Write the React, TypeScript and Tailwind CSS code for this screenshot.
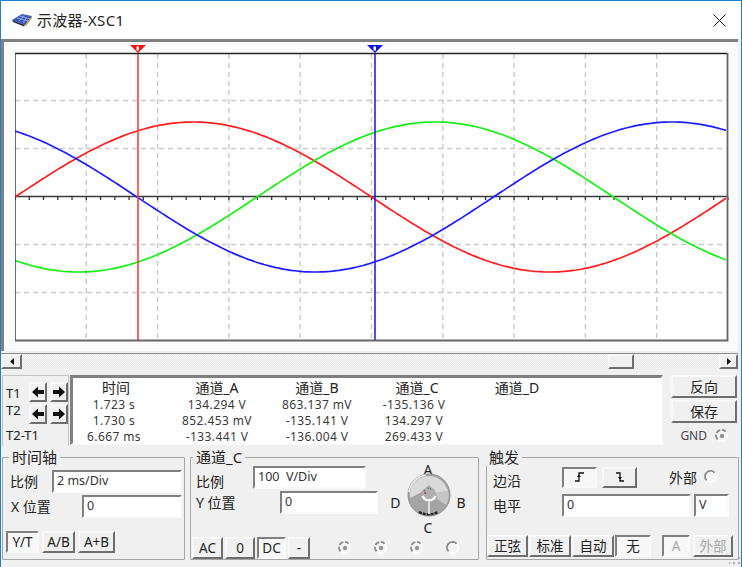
import type { ReactNode } from 'react';

const font = "font-['Noto_Sans','Noto_Sans_CJK_SC',sans-serif]";
const raised = 'border-2 border-t-[#f8f8f8] border-l-[#f8f8f8] border-r-[#6e6e6e] border-b-[#6e6e6e] bg-[#f0f0f0]';
const sunken = 'border-2 border-t-[#808080] border-l-[#808080] border-r-[#fafafa] border-b-[#fafafa]';

const curve = (fn: (x: number) => number) => {
  const pts: string[] = [];
  for (let x = 15; x <= 727; x += 3) pts.push(`${x},${fn(x).toFixed(1)}`);
  return pts.join(' ');
};
const wave = (x: number, zero: number, sign: number) => 197 - sign * 75 * Math.sin((2 * Math.PI * (x - zero)) / 713);

const rows = [
  ['1.723 s', '134.294 V', '863.137 mV', '-135.136 V'],
  ['1.730 s', '852.453 mV', '-135.141 V', '134.297 V'],
  ['6.667 ms', '-133.441 V', '-136.004 V', '269.433 V'],
];

function Btn({ w, pressed, disabled, children }: { w: string; pressed?: boolean; disabled?: boolean; children: ReactNode }) {
  return (
    <div
      className={`${w} h-full flex items-center justify-center text-[13.5px] ${pressed ? sunken : raised} ${pressed ? 'bg-[#f7f7f7]' : ''} ${disabled ? 'text-[#a8a8a8]' : 'text-[#222]'}`}
    >
      {children}
    </div>
  );
}

function Field({ w, value }: { w: string; value: string }) {
  return (
    <div className={`${w} h-[23px] ${sunken} bg-white flex items-center pl-[3px] text-[12.5px] text-[#333] whitespace-pre`}>{value}</div>
  );
}

function Radio({ on }: { on?: boolean }) {
  return (
    <svg width="14" height="14" viewBox="0 0 14 14" className="shrink-0">
      <circle cx="7" cy="7" r="5.5" fill="#f5f5f5" stroke="#fbfbfb" strokeWidth="1.4" />
      <path d="M2.6 10.4A5.5 5.5 0 0 1 10.6 2.6" fill="none" stroke="#8a8a8a" strokeWidth="1.8" strokeDasharray={on ? '5 1.5' : undefined} />
      {on && <circle cx="7" cy="7" r="2.2" fill="#949494" />}
    </svg>
  );
}

function Arrow({ dir }: { dir: 'l' | 'r' }) {
  return (
    <div className={`w-[18px] h-[20px] flex items-center justify-center ${raised}`}>
      <svg width="12" height="12" viewBox="0 0 12 12">
        <path d={dir === 'l' ? 'M0 6 L6 0.5 V4 H12 V8 H6 V11.5 Z' : 'M12 6 L6 0.5 V4 H0 V8 H6 V11.5 Z'} fill="#111" />
      </svg>
    </div>
  );
}

function Knob() {
  return (
    <svg width="48" height="48" viewBox="0 0 48 48" className="block shrink-0">
      <circle cx="24" cy="24" r="21" fill="#a4a4a4" stroke="#8e8e8e" strokeWidth="1" />
      <path d="M5 27A19 19 0 0 1 24 5C33 5 40 11 43 20L31 22L24 14L15 22Z" fill="#dadada" />
      <path d="M4 21A20 20 0 0 1 21 4" fill="none" stroke="#f2f2f2" strokeWidth="1.5" />
      <path d="M43 20A19 19 0 0 1 41 34L32 28L31 22Z" fill="#c6c6c6" />
      <path d="M14 41A20 20 0 0 0 33 41" fill="none" stroke="#1c1c1c" strokeWidth="2.2" strokeDasharray="3 1" />
      <circle cx="24" cy="23" r="7" fill="#b0b0b0" />
      <path d="M17.5 25A7 7 0 0 0 30.5 25" fill="none" stroke="#fbfbfb" strokeWidth="2.4" />
      <path d="M24 31V43" stroke="#f4f4f4" strokeWidth="1.5" />
      <path d="M19 19L21 23M23 17L26 18" stroke="#555" strokeWidth="1.2" strokeDasharray="1 1" />
      <circle cx="20" cy="22" r="0.9" fill="#b04a30" />
    </svg>
  );
}

function Edge({ falling }: { falling?: boolean }) {
  return (
    <svg width="14" height="12" viewBox="0 0 14 12">
      <path d={falling ? 'M3 2H7V10H11' : 'M2 10H6V2H11'} fill="none" stroke="#111" strokeWidth="1.3" />
      <path d={falling ? 'M5 6H9L7 8.5Z' : 'M4 6H8L6 3.5Z'} fill="#111" />
    </svg>
  );
}

function Group({ title, w, legend, children }: { title: string; w: string; legend: string; children: ReactNode }) {
  return (
    <fieldset className={`${w} h-[112px] border border-[#a6a6a6] rounded-[1px] -mt-px`}>
      <legend className={`${legend} px-[3px] text-[15px] leading-[18px] text-[#222]`}>{title}</legend>
      {children}
    </fieldset>
  );
}

export default function App() {
  return (
    <div className={`relative w-[742px] h-[567px] overflow-hidden flex flex-col bg-[#f0f0f0] border border-b-0 border-[#1b82d2] ${font}`}>
      {/* Title bar */}
      <div className="h-[38px] shrink-0 bg-white flex items-center pl-[10px] pr-[15px]">
        <svg width="22" height="14" viewBox="0 0 22 14" className="mr-[3px]">
          <path d="M1 7L11 1L21 3L14 12Z" fill="#3c58b8" />
          <path d="M1 7L14 12L13 13.5L2 9Z" fill="#22284a" />
          <path d="M14 12L21 3V5L15 13Z" fill="#c89030" />
          <path d="M6 5L17 8M9 3L19 6M8 8L13 2.5M12 10L16 4.5" stroke="#9db8f0" strokeWidth="0.8" fill="none" />
        </svg>
        <span className="text-[15px] tracking-[0.3px] text-[#222] ml-[1px]">示波器-XSC1</span>
        <svg width="13" height="13" viewBox="0 0 13 13" className="ml-auto">
          <path d="M0.5 0.5L12.5 12.5M12.5 0.5L0.5 12.5" stroke="#111" strokeWidth="1" />
        </svg>
      </div>

      {/* Scope display */}
      <div className="h-[312px] shrink-0 mr-[3px] bg-[#fbfbfb] border-t-[3px] border-l-[3px] border-[#808080] pl-[11px] pt-[3px]">
        <svg width="714" height="297" viewBox="15 45 714 297" className="block">
          <rect x="15" y="53" width="713" height="287" fill="#fff" />
          {[1, 2, 3, 4, 5, 6, 7, 8, 9].map((i) => (
            <line key={i} x1={15 + i * 71.3} y1="54" x2={15 + i * 71.3} y2="340" stroke="#c9c9c9" strokeWidth="1.4" strokeDasharray="5 4" />
          ))}
          {[100.5, 148.5, 244.5, 292.5].map((y) => (
            <line key={y} x1="15" y1={y} x2="728" y2={y} stroke="#c9c9c9" strokeWidth="1.4" strokeDasharray="5 4" />
          ))}
          <line x1="15" y1="196.5" x2="728" y2="196.5" stroke="#3a3a3a" strokeWidth="1.6" />
          {Array.from({ length: 51 }, (_, i) => (
            <line key={i} x1={15 + i * 14.26} y1="197" x2={15 + i * 14.26} y2="200" stroke="#333" strokeWidth="1.3" />
          ))}
          <polyline points={curve((x) => wave(x, 15, 1))} fill="none" stroke="#ff1c1c" strokeWidth="1.7" />
          <polyline points={curve((x) => wave(x, 257, 1))} fill="none" stroke="#14f014" strokeWidth="1.7" />
          <polyline points={curve((x) => wave(x, 137, -1))} fill="none" stroke="#1c1cff" strokeWidth="1.7" />
          <line x1="138" y1="53" x2="138" y2="340" stroke="#ff3c3c" strokeWidth="1.6" />
          <line x1="375" y1="53" x2="375" y2="340" stroke="#2020f0" strokeWidth="1.6" />
          <path d="M130 45H146L138 53Z" fill="#f01010" />
          <rect x="136.5" y="46.5" width="2.5" height="4" fill="#fff" />
          <path d="M367 45H383L375 53Z" fill="#1010e0" />
          <rect x="373.5" y="46.5" width="2.5" height="4" fill="#fff" />
          <path d="M15 340V53.5H727" fill="none" stroke="#222" strokeWidth="1.3" />
          <path d="M727.5 53V340.5H15" fill="none" stroke="#666" strokeWidth="1.8" />
        </svg>
      </div>

      {/* Horizontal scrollbar */}
      <div className="h-[16px] shrink-0 mt-[2px] mr-[3px] flex bg-[repeating-conic-gradient(#f6f6f6_0_25%,#e8e8e8_0_50%)] bg-[length:2px_2px] border-t border-[#8a8a8a]">
        <div className={`w-[21px] flex items-center justify-center ${raised}`}>
          <svg width="4" height="7" viewBox="0 0 4 7"><path d="M4 0V7L0 3.5Z" fill="#111" /></svg>
        </div>
        <div className={`w-[26px] ml-[586px] ${raised}`} />
        <div className={`w-[19px] ml-auto flex items-center justify-center ${raised}`}>
          <svg width="4" height="7" viewBox="0 0 4 7"><path d="M0 0V7L4 3.5Z" fill="#111" /></svg>
        </div>
      </div>

      {/* Cursors, readout, reverse / save */}
      <div className="h-[71px] shrink-0 mt-[6px] pl-[1px] flex text-[#222]">
        <div className="w-[67px] border border-[#c4c4c4] border-b-0">
          <div className="flex">
            <div className="w-[26px] pl-[3px] pt-[9px] text-[13px] leading-[17px]">
              <div>T1</div>
              <div>T2</div>
            </div>
            <div className="pt-[6px] flex flex-col gap-[2px]">
              <div className="flex gap-[3px]"><Arrow dir="l" /><Arrow dir="r" /></div>
              <div className="flex gap-[3px]"><Arrow dir="l" /><Arrow dir="r" /></div>
            </div>
          </div>
          <div className="pl-[3px] mt-[3px] text-[13px] leading-[16px]">T2-T1</div>
        </div>

        <div className={`w-[593px] ml-[1px] h-[70px] ${sunken} border-t-[3px] border-l-[3px] bg-white`}>
          <div className="grid grid-cols-[94px_100px_100px_100px_100px] text-center text-[12px] tracking-[0.4px] leading-[16px] text-[#3a3a3a]">
            <div className="pr-[8px] text-[14px] tracking-normal leading-[19px] text-[#222]">时间</div>
            <div className="text-[14px] tracking-normal leading-[19px] text-[#222]">通道_A</div>
            <div className="text-[14px] tracking-normal leading-[19px] text-[#222]">通道_B</div>
            <div className="text-[14px] tracking-normal leading-[19px] text-[#222]">通道_C</div>
            <div className="text-[14px] tracking-normal leading-[19px] text-[#222]">通道_D</div>
            {rows.map((r) => [
              <div key={r[0]} className="pr-[12px]">{r[0]}</div>,
              <div key={r[0] + 'a'}>{r[1]}</div>,
              <div key={r[0] + 'b'}>{r[2]}</div>,
              <div key={r[0] + 'c'} className="pr-[6px]">{r[3]}</div>,
              <div key={r[0] + 'd'} />,
            ])}
          </div>
        </div>

        <div className="ml-[8px] w-[66px] flex flex-col gap-[2px]">
          <div className={`h-[23px] flex items-center justify-center text-[14px] ${raised}`}>反向</div>
          <div className={`h-[23px] flex items-center justify-center text-[14px] ${raised}`}>保存</div>
          <div className="flex items-center justify-end gap-[8px] pr-[8px] mt-[2px] text-[12px] text-[#444]">
            GND <Radio on />
          </div>
        </div>
      </div>

      {/* Timebase, channel and trigger groups */}
      <div className="h-[113px] shrink-0 mt-[3px] pl-[1px] flex text-[#222] text-[14px]">
        <Group title="时间轴" w="w-[183px]" legend="ml-[6px]">
          <div className="flex items-center h-[23px] mt-[4px] pl-[7px]">
            <span className="w-[42px]">比例</span>
            <Field w="w-[130px]" value="2 ms/Div" />
          </div>
          <div className="flex items-center h-[23px] mt-[2px] pl-[8px]">
            <span className="w-[71px]">X 位置</span>
            <Field w="w-[100px]" value="0" />
          </div>
          <div className="flex h-[22px] mt-[13px] pl-[3px] gap-[3px] text-[13px]">
            <Btn w="w-[33px]" pressed>Y/T</Btn>
            <Btn w="w-[33px]">A/B</Btn>
            <Btn w="w-[37px]">A+B</Btn>
          </div>
        </Group>

        <div className="ml-[5px]">
          <Group title="通道_C" w="w-[289px]" legend="ml-[2px]">
            <div className="flex h-[72px]">
              <div className="w-[196px] pl-[5px]">
                <div className="flex items-center h-[23px]">
                  <span className="w-[57px] pt-[8px]">比例</span>
                  <Field w="w-[113px]" value="100  V/Div" />
                </div>
                <div className="flex items-center h-[23px] mt-[2px]">
                  <span className="w-[84px]">Y 位置</span>
                  <Field w="w-[98px]" value="0" />
                </div>
              </div>
              <div className="w-[82px] text-[14px] leading-[15px] text-center -mt-[4px]">
                <div>A</div>
                <div className="flex justify-center gap-[4px] -mt-[6px] mb-[1px]">
                  <span className="pt-[24px]">D</span>
                  <Knob />
                  <span className="pt-[24px]">B</span>
                </div>
                <div>C</div>
              </div>
            </div>
            <div className="flex items-center h-[22px] pl-[1px] -mt-[1px] gap-[2px]">
              <Btn w="w-[31px]">AC</Btn>
              <Btn w="w-[30px]">0</Btn>
              <Btn w="w-[29px]" pressed>DC</Btn>
              <Btn w="w-[22px]">-</Btn>
              <div className="ml-[26px] flex gap-[22px]">
                <Radio on />
                <Radio on />
                <Radio on />
                <Radio />
              </div>
            </div>
          </Group>
        </div>

        <div className="ml-[7px]">
          <Group title="触发" w="w-[253px]" legend="-ml-[1px]">
            <div className="flex items-center h-[22px] pl-[6px]">
              <span className="w-[69px] pt-[6px]">边沿</span>
              <div className={`w-[35px] h-[21px] flex items-center justify-center bg-[#f7f7f7] ${sunken}`}><Edge /></div>
              <div className={`w-[35px] h-[21px] ml-[5px] flex items-center justify-center ${raised}`}><Edge falling /></div>
              <span className="ml-[32px]">外部</span>
              <div className="ml-[7px]"><Radio /></div>
            </div>
            <div className="flex items-center h-[23px] mt-[6px] pl-[6px]">
              <span className="w-[69px]">电平</span>
              <Field w="w-[129px]" value="0" />
              <div className="ml-[3px]"><Field w="w-[35px]" value="V" /></div>
            </div>
            <div className="flex h-[22px] mt-[18px] gap-[1px] text-[14px]">
              <Btn w="w-[41px]">正弦</Btn>
              <Btn w="w-[42px]">标准</Btn>
              <Btn w="w-[42px]">自动</Btn>
              <Btn w="w-[36px]" pressed>无</Btn>
              <div className="ml-[10px] flex gap-[3px]">
                <Btn w="w-[28px]" pressed disabled>A</Btn>
                <Btn w="w-[40px]" disabled>外部</Btn>
              </div>
            </div>
          </Group>
        </div>
      </div>

      {/* Resize grip */}
      <svg width="12" height="12" viewBox="0 0 12 12" className="absolute right-0 bottom-0">
        <path d="M9 2h2v2H9zM9 7h2v2H9zM4 7h2v2H4zM-1 7h2v2h-2z" fill="#a6a6a6" />
      </svg>
    </div>
  );
}
